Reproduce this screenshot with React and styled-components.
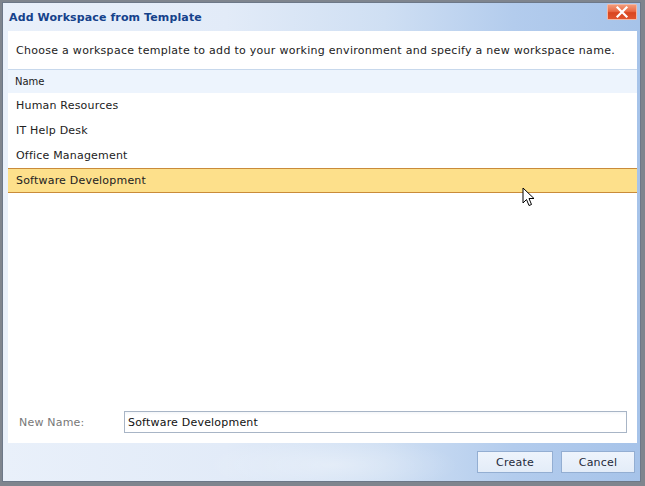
import React from "react";
import styled, { createGlobalStyle } from "styled-components";

const Global = createGlobalStyle`
  html, body { margin: 0; padding: 0; }
  body {
    width: 645px;
    height: 486px;
    overflow: hidden;
    background: #7f858e;
    font-family: "DejaVu Sans", Verdana, sans-serif;
  }
`;

const Page = styled.div`
  position: relative;
  width: 645px;
  height: 486px;
  padding: 2px 0 0 2px;
  box-sizing: border-box;
`;

const Window = styled.div`
  width: 639px;
  height: 480px;
  box-sizing: border-box;
  border: 1px solid #6d7888;
  background:
    radial-gradient(ellipse 180px 40px at 330px 462px, rgba(255,255,255,0.35), rgba(255,255,255,0) 70%),
    linear-gradient(90deg, #e9f0fa 0%, #e2ebf8 35%, #cfdff3 60%, #b3cced 80%, #a6c3e9 100%);
  display: flex;
  flex-direction: column;
`;

const TitleBar = styled.div`
  height: 28px;
  display: flex;
  align-items: center;
  justify-content: space-between;
  padding: 0 3px 0 6px;
  box-sizing: border-box;
`;

const Title = styled.div`
  font-weight: bold;
  font-size: 11px;
  letter-spacing: 0.12px;
  color: #15428b;
  padding-top: 1px;
`;

const CloseButton = styled.div`
  align-self: flex-start;
  margin-top: 1px;
  width: 30px;
  height: 16px;
  box-sizing: border-box;
  border: 1px solid #f3b8a3;
  border-radius: 1px;
  background: linear-gradient(180deg, #f29a78 0%, #ea6a45 45%, #d9461f 55%, #e0552e 100%);
  display: flex;
  align-items: center;
  justify-content: center;
`;

const Panel = styled.div`
  margin: 0 3px 0 5px;
  height: 412px;
  background: #ffffff;
  display: flex;
  flex-direction: column;
`;

const Description = styled.div`
  font-size: 11px;
  letter-spacing: 0.28px;
  line-height: 16px;
  color: #222;
  padding: 12px 0 10px 8px;
  white-space: nowrap;
`;

const Grid = styled.div`
  flex: 1;
  display: flex;
  flex-direction: column;
  border-top: 1px solid #c7d8ec;
`;

const HeaderRow = styled.div`
  height: 23px;
  background: #edf4fd;
  display: flex;
  align-items: center;
  padding-left: 7px;
  font-size: 10px;
  color: #1a1a1a;
`;

const Row = styled.div`
  height: 25px;
  box-sizing: border-box;
  display: flex;
  align-items: center;
  padding-left: 8px;
  font-size: 11px;
  letter-spacing: 0.2px;
  color: #222;
  background: ${(p) => (p.$selected ? "#fde08b" : "#ffffff")};
  border-top: 1px solid ${(p) => (p.$selected ? "#c98b3a" : "transparent")};
  border-bottom: 1px solid ${(p) => (p.$selected ? "#c98b3a" : "transparent")};
`;

const NameRow = styled.div`
  display: flex;
  align-items: center;
  padding: 0 10px 10px 11px;
`;

const Label = styled.div`
  width: 105px;
  font-size: 11px;
  letter-spacing: 0.2px;
  color: #777;
`;

const Input = styled.div`
  width: 503px;
  height: 22px;
  box-sizing: border-box;
  border: 1px solid #a8b5c6;
  background: linear-gradient(180deg, #f4f6f9 0px, #ffffff 3px);
  display: flex;
  align-items: center;
  padding-left: 3px;
  font-size: 11px;
  letter-spacing: 0.2px;
  color: #111;
`;

const Footer = styled.div`
  flex: 1;
  display: flex;
  justify-content: flex-end;
  align-items: flex-start;
  gap: 8px;
  padding: 8px 5px 0 0;
`;

const Button = styled.div`
  width: ${(p) => p.$w}px;
  height: 22px;
  box-sizing: border-box;
  border: 1px solid #93aed2;
  background: linear-gradient(180deg, #eef4fc 0%, #e3ecf8 100%);
  display: flex;
  align-items: center;
  justify-content: center;
  font-size: 11px;
  letter-spacing: 0.2px;
  color: #1e2a3a;
`;

const Cursor = styled.svg`
  position: absolute;
  left: 522px;
  top: 187px;
`;

const items = ["Human Resources", "IT Help Desk", "Office Management", "Software Development"];

export default function App() {
  return (
    <Page>
      <Global />
      <Window>
        <TitleBar>
          <Title>Add Workspace from Template</Title>
          <CloseButton>
            <svg width="14" height="12" viewBox="0 0 14 12">
              <path d="M2.5 1.5 L11.5 10.5 M11.5 1.5 L2.5 10.5" stroke="#fff" strokeWidth="2.2" strokeLinecap="square" />
            </svg>
          </CloseButton>
        </TitleBar>
        <Panel>
          <Description>
            Choose a workspace template to add to your working environment and specify a new workspace name.
          </Description>
          <Grid>
            <HeaderRow>Name</HeaderRow>
            {items.map((it, i) => (
              <Row key={it} $selected={i === 3}>{it}</Row>
            ))}
          </Grid>
          <NameRow>
            <Label>New Name:</Label>
            <Input>Software Development</Input>
          </NameRow>
        </Panel>
        <Footer>
          <Button $w={76}>Create</Button>
          <Button $w={74}>Cancel</Button>
        </Footer>
      </Window>
      <Cursor width="14" height="21" viewBox="0 0 14 21">
        <path d="M1 1 L1 16 L4.5 12.5 L7 18.5 L9.5 17.5 L7 11.5 L12 11.5 Z" fill="#fff" stroke="#000" strokeWidth="1" strokeLinejoin="miter" />
      </Cursor>
    </Page>
  );
}
